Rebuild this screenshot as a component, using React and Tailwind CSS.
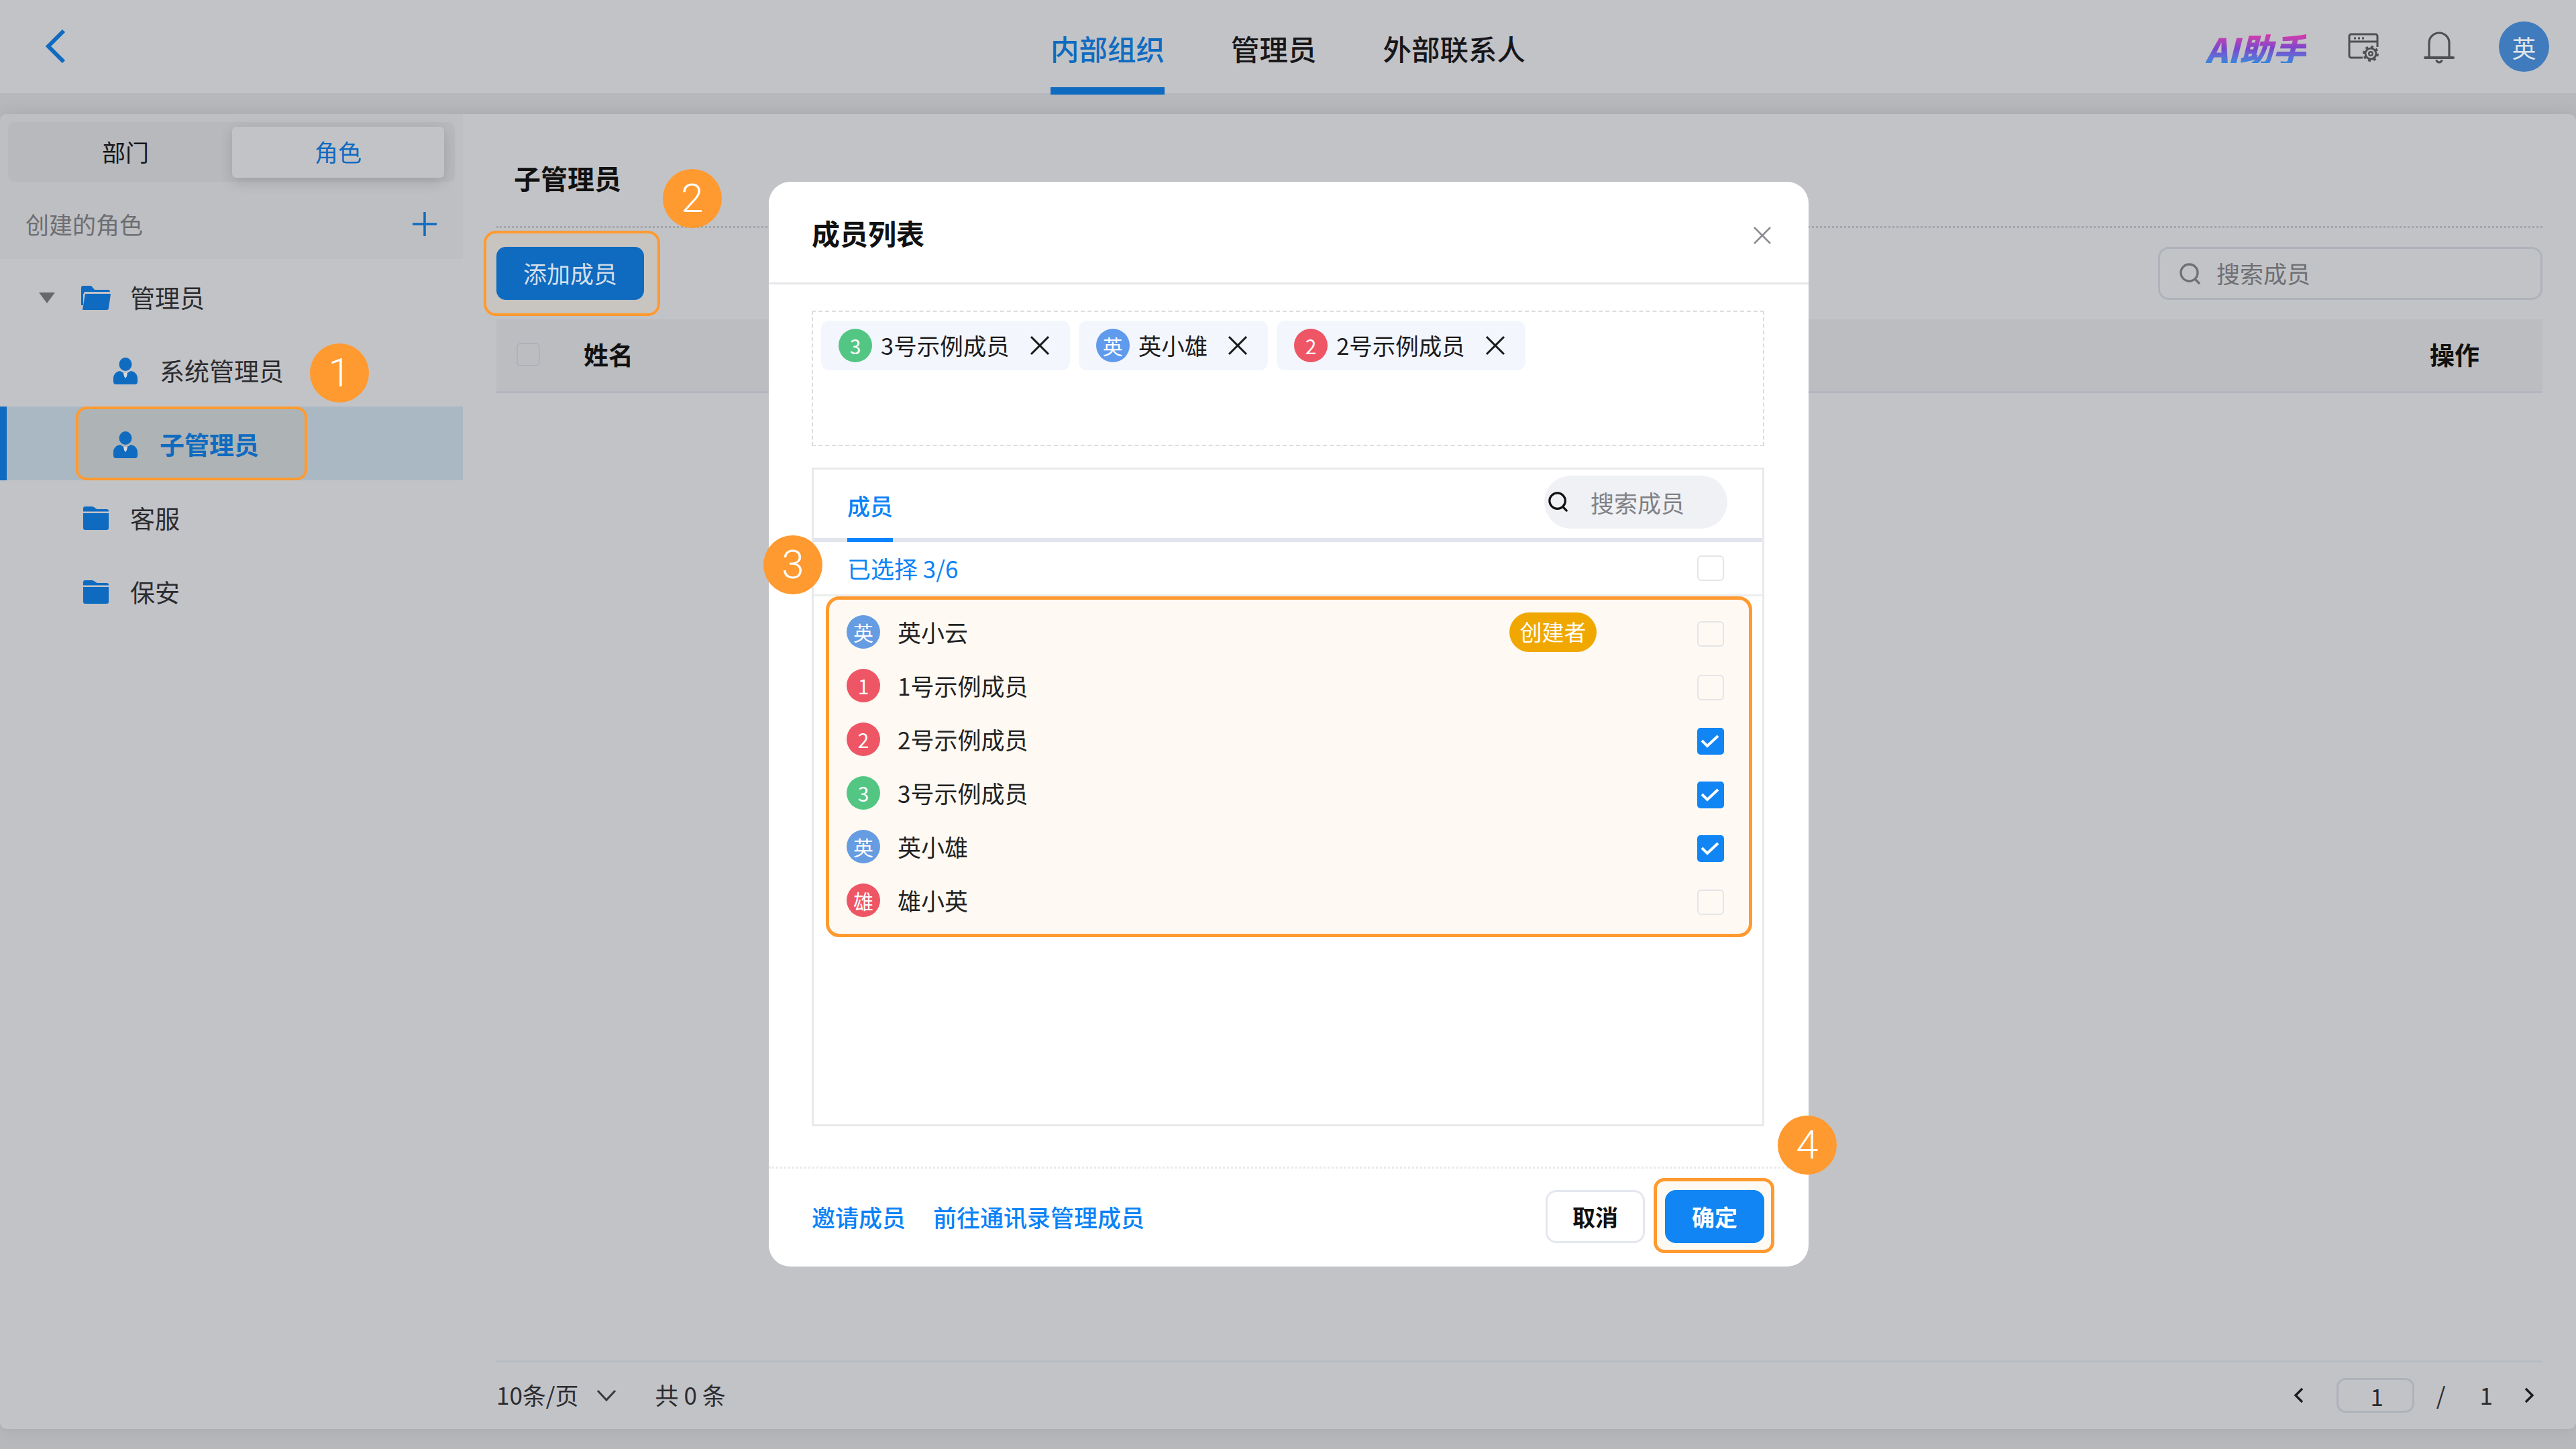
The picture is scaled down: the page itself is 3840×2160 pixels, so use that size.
const members = [
  { name: "英小云", mark: "英", color: "bg-[#659ce2]", creator: true },
  { name: "1号示例成员", mark: "1", color: "bg-[#ee5565]" },
  { name: "2号示例成员", mark: "2", color: "bg-[#ee5565]", checked: true },
  { name: "3号示例成员", mark: "3", color: "bg-[#53c684]", checked: true },
  { name: "英小雄", mark: "英", color: "bg-[#659ce2]", checked: true },
  { name: "雄小英", mark: "雄", color: "bg-[#ee5565]" },
];

const chips = [
  { name: "3号示例成员", mark: "3", color: "bg-[#53c684]" },
  { name: "英小雄", mark: "英", color: "bg-[#5f9aec]" },
  { name: "2号示例成员", mark: "2", color: "bg-[#ee5565]" },
];

const SearchIcon = ({ className }) => (
  <svg viewBox="0 0 34 34" fill="none" stroke="currentColor" strokeWidth="3.4" strokeLinecap="round" className={className}>
    <circle cx="15.5" cy="15.5" r="12.5" />
    <path d="M25 26l5 5" />
  </svg>
);

const OpenFolderIcon = () => (
  <svg viewBox="0 0 44 36" className="w-[44px] h-[36px] shrink-0" fill="#0f6bc0">
    <path d="M3 0h12l5 6h20a3 3 0 0 1 3 3H5l-2 4v16H0V3a3 3 0 0 1 3-3z" />
    <path d="M6 12h38l-3 21a3 3 0 0 1-3 3H2z" />
  </svg>
);

const FolderIcon = () => (
  <svg viewBox="0 0 38 35" className="w-[38px] h-[35px] shrink-0" fill="#0f6bc0">
    <path d="M0 3a3 3 0 0 1 3-3h10c3 0 5 3 8 4h14a3 3 0 0 1 3 3v.5H0z" />
    <path d="M0 10h38v22a3 3 0 0 1-3 3H3a3 3 0 0 1-3-3z" />
  </svg>
);

const UserIcon = () => (
  <svg viewBox="0 0 36 40" className="w-[36px] h-[40px] shrink-0" fill="#0f6bc0">
    <ellipse cx="18" cy="10" rx="9.5" ry="10" />
    <path d="M10 20c-6 1-10 5-10 11v5a4 4 0 0 0 4 4h28a4 4 0 0 0 4-4v-5c0-6-4-10-10-11l-5 3h-6z" />
    <path d="M15 23h6l-1 5-2 3-2-3z" fill="#d5dbe2" />
  </svg>
);

const CloseIcon = () => (
  <svg viewBox="0 0 30 30" className="w-[30px] h-[30px] shrink-0" stroke="#1a1a1c" strokeWidth="3">
    <path d="M2 2l26 26M28 2L2 28" />
  </svg>
);

const Checkbox = ({ checked, white }) =>
  checked ? (
    <span className="block w-[40px] h-[40px] rounded-[5px] bg-[#1085f3] shrink-0">
      <svg viewBox="0 0 40 40" className="w-[40px] h-[40px]" fill="none" stroke="#fff" strokeWidth="4">
        <path d="M7 19l8 8 16-15" />
      </svg>
    </span>
  ) : (
    <span className={`block w-[40px] h-[38px] rounded-[6px] border-[2px] border-[#e4e5e8] shrink-0 ${white ? "bg-white" : "bg-[#fef9f3]"}`} />
  );

const Avatar = ({ mark, color }) => (
  <span className={`w-[50px] h-[50px] rounded-full flex items-center justify-center text-white text-[30px] leading-none shrink-0 ${color}`}>
    {mark}
  </span>
);

const Step = ({ n, className }) => (
  <span className={`absolute z-30 w-[88px] h-[88px] rounded-full bg-[#ff9a30] text-white font-['Roboto',sans-serif] text-[60px] font-light leading-none flex items-center justify-center ${className}`}>
    {n}
  </span>
);

const Modal = () => (
  <div className="absolute z-20 left-[1146px] top-[271px] w-[1550px] h-[1617px] bg-white rounded-[32px] flex flex-col">
    <div className="h-[153px] shrink-0 border-b-[3px] border-[#e6e7ea] flex items-center justify-between pl-[64px] pr-[55px]">
      <span className="text-[42px] font-bold text-[#111]">成员列表</span>
      <svg viewBox="0 0 28 28" className="w-[28px] h-[28px] mt-[10px]" stroke="#8b8c90" strokeWidth="2.5">
        <path d="M2 2l24 24M26 2L2 26" />
      </svg>
    </div>

    <div className="pl-[64px] pr-[66px] pt-[39px] flex-1 flex flex-col">
      <div className="h-[202px] border-[2px] border-dashed border-[#dcdde1] pl-[12px] pt-[13px] flex items-start gap-[13px]">
        {chips.map((c) => (
          <div key={c.name} className="h-[74px] rounded-[12px] bg-[#f3f6fd] flex items-center pl-[26px] pr-[30px]">
            <Avatar mark={c.mark} color={c.color} />
            <span className="ml-[13px] mr-[30px] text-[34.5px] text-[#1c1c1e]">{c.name}</span>
            <CloseIcon />
          </div>
        ))}
      </div>

      <div className="mt-[32px] h-[982px] border-[3px] border-[#e8e9ec] flex flex-col">
        <div className="h-[108px] shrink-0 border-b-[6px] border-[#e2e5ec] flex items-center pl-[50px] pr-[52px]">
          <div className="relative h-full flex items-center pt-[4px]">
            <span className="text-[34px] font-medium text-[#0a82f7]">成员</span>
            <span className="absolute left-0 right-0 -bottom-[6px] h-[6px] bg-[#0a84ff]" />
          </div>
          <div className="ml-auto w-[273px] h-[79px] mt-[-6px] rounded-full bg-[#f0f1f5] flex items-center pl-[5px] text-[#808285]">
            <SearchIcon className="w-[32px] h-[32px] text-[#111]" />
            <span className="ml-[32px] text-[35px] pt-[2px]">搜索成员</span>
          </div>
        </div>

        <div className="h-[81px] shrink-0 border-b-[3px] border-[#eceded] flex items-center justify-between pl-[50px] pr-[57px]">
          <span className="text-[35px] text-[#0a82f7]">已选择 3/6</span>
          <Checkbox white />
        </div>

        <div className="ml-[18px] mr-[15px] h-[508px] border-[5px] border-[#ff9a30] rounded-[20px] bg-[#fef9f3] pt-[8px] pl-[26px] pr-[37px]">
          {members.map((m) => (
            <div key={m.name} className="h-[80px] flex items-center">
              <Avatar mark={m.mark} color={m.color} />
              <span className="ml-[26px] text-[35px] text-[#222]">{m.name}</span>
              {m.creator && (
                <span className="ml-auto w-[130px] h-[59px] rounded-full bg-[#f0a800] text-white text-[33px] flex items-center justify-center">
                  创建者
                </span>
              )}
              <span className={`block shrink-0 ${m.creator ? "ml-[150px]" : "ml-auto"} mt-[6px]`}>
                <Checkbox checked={m.checked} />
              </span>
            </div>
          ))}
        </div>
      </div>
    </div>

    <div className="h-[149px] shrink-0 border-t-[3px] border-dotted border-[#e8e9ec] flex items-start pt-[32px] pl-[64px] pr-[66px]">
      <span className="mt-[14px] text-[35px] font-medium text-[#0a82f7]">邀请成员</span>
      <span className="ml-[41px] mt-[14px] text-[35px] font-medium text-[#0a82f7]">前往通讯录管理成员</span>
      <button className="ml-auto w-[148px] h-[79px] rounded-[16px] border-[3px] border-[#e4e7ee] bg-white text-[34px] font-bold text-[#111]">
        取消
      </button>
      <div className="relative ml-[30px]">
        <span className="absolute -left-[17px] -right-[15px] -top-[18px] -bottom-[15px] rounded-[16px] border-[5px] border-[#ff9a30] bg-[#fef9f3]" />
        <button className="relative w-[148px] h-[79px] rounded-[16px] bg-[#1085f3] text-[34px] font-bold text-white">确定</button>
      </div>
    </div>
  </div>
);

export default function App() {
  return (
    <div className="relative w-[3840px] h-[2160px] overflow-hidden bg-[#b6b8bc] font-['Noto_Sans_CJK_SC','Liberation_Sans',sans-serif] text-[#1c1c1e]">
      {/* top bar */}
      <header className="relative z-10 h-[139px] bg-[#c2c3c7] flex items-start pl-[68px] pr-[40px]">
        <svg viewBox="0 0 30 50" className="w-[30px] h-[50px] mt-[44px]" fill="none" stroke="#0f6bc0" strokeWidth="6">
          <path d="M27 2L4 25l23 23" />
        </svg>
        <nav className="ml-[1468px] flex gap-[99px] text-[42.5px] font-medium">
          <div className="h-[141px] border-b-[11px] border-[#0f6bc0] text-[#0f6bc0] pt-[42px] leading-[60px]">内部组织</div>
          <div className="pt-[42px] leading-[60px] text-[#17171a]">管理员</div>
          <div className="pt-[42px] leading-[60px] text-[#17171a]">外部联系人</div>
        </nav>
        <div className="ml-auto flex items-start">
          <span className="mt-[50px] text-[50px] leading-[44px] italic font-black bg-linear-to-b from-[#e02fa6] via-[#7a45cc] to-[#2f86dd] bg-clip-text text-transparent">
            AI助手
          </span>
          <svg viewBox="0 0 46 44" className="ml-[62px] mt-[49px] w-[46px] h-[44px]" fill="none" stroke="#4f5054" strokeWidth="3">
            <path d="M22 37H5a3 3 0 0 1-3-3V5a3 3 0 0 1 3-3h36a3 3 0 0 1 3 3v16" />
            <path d="M2 13h42" />
            <path d="M9 8h3M15 8h3M21 8h3" />
            <circle cx="34" cy="31" r="8" />
            <circle cx="34" cy="31" r="10.5" strokeWidth="3" strokeDasharray="4 4.2" />
            <circle cx="34" cy="31" r="2.8" strokeWidth="2.4" />
          </svg>
          <svg viewBox="0 0 46 48" className="ml-[67px] mt-[47px] w-[46px] h-[48px]" fill="none" stroke="#4f5054" strokeWidth="3.2">
            <path d="M8 38V17a15 15 0 0 1 30 0v21" />
            <path d="M2 39h42" strokeWidth="4" strokeLinecap="round" />
            <path d="M19 42a4 4 0 0 0 8 0" />
          </svg>
          <span className="ml-[66px] mt-[32px] w-[75px] h-[75px] rounded-full bg-[#3f7bbd] text-[#dfe3e8] text-[36px] flex items-center justify-center">
            英
          </span>
        </div>
      </header>

      <div className="mt-[31px] h-[1960px] rounded-[10px] bg-[#c2c3c7] shadow-[0_0_26px_rgba(0,0,0,0.09)] flex overflow-hidden">
        {/* sidebar */}
        <aside className="w-[690px] shrink-0 flex flex-col">
          <div className="h-[216px] bg-[#bdbfc3] pt-[12px] px-[12px]">
            <div className="h-[89px] rounded-[10px] bg-[#b7b9bd] flex items-center pr-[15px] text-[35px] text-[#17171a]">
              <span className="w-[334px] pl-[16px] text-center">部门</span>
              <span className="w-[316px] h-[76px] rounded-[6px] bg-[#c2c3c7] shadow-[0_6px_20px_rgba(0,0,0,0.14)] text-[#0f6bc0] flex items-center justify-center">
                角色
              </span>
            </div>
            <div className="mt-[37px] pl-[26px] pr-[27px] flex items-center justify-between text-[35px] text-[#6d6e72]">
              <span>创建的角色</span>
              <svg viewBox="0 0 36 36" className="w-[36px] h-[36px]" stroke="#0f6bc0" strokeWidth="3.5">
                <path d="M18 0v36M0 18h36" />
              </svg>
            </div>
          </div>

          <div className="text-[37px] text-[#2c2c30]">
            <div className="h-[110px] flex items-center pl-[58px] pt-[5px]">
              <span className="w-0 h-0 border-x-[12px] border-x-transparent border-t-[16px] border-t-[#67686c]" />
              <span className="ml-[39px]"><OpenFolderIcon /></span>
              <span className="ml-[29px]">管理员</span>
            </div>
            <div className="h-[110px] flex items-center pl-[169px] pt-[3px]">
              <UserIcon />
              <span className="ml-[33px]">系统管理员</span>
            </div>
            <div className="h-[110px] flex bg-[#aab8c4] border-l-[10px] border-[#0f6bc0]">
              <div className="ml-[103px] w-[345px] h-full border-[4px] border-[#ff9a30] rounded-[16px] bg-[#aeb4b6] flex items-center pl-[52px] pt-[3px] text-[#0f6bc0] font-bold">
                <UserIcon />
                <span className="ml-[33px]">子管理员</span>
              </div>
            </div>
            <div className="h-[110px] flex items-center pl-[124px] pt-[3px]">
              <FolderIcon />
              <span className="ml-[32px]">客服</span>
            </div>
            <div className="h-[110px] flex items-center pl-[124px] pt-[3px]">
              <FolderIcon />
              <span className="ml-[32px]">保安</span>
            </div>
          </div>
        </aside>

        {/* main */}
        <main className="flex-1 flex flex-col pl-[50px] pr-[50px]">
          <div className="h-[170px] shrink-0 border-b-[3px] border-dotted border-[#a3a6ac] flex items-center pl-[26px] pt-[22px]">
            <span className="text-[40px] font-bold text-[#111]">子管理员</span>
          </div>

          <div className="mt-[28px] flex items-center justify-between">
            <div className="relative">
              <span className="absolute -left-[19px] -right-[24px] -top-[24px] -bottom-[24px] rounded-[18px] border-[4px] border-[#ff9a30] bg-[#c8c4bf]" />
              <button className="relative w-[220px] h-[79px] rounded-[14px] bg-[#0f6bc0] text-[35px] text-[#d4deea]">添加成员</button>
            </div>
            <div className="w-[573px] h-[79px] rounded-[16px] border-[3px] border-[#aeb2ba] flex items-center pl-[28px] text-[#6f7074]">
              <SearchIcon className="w-[34px] h-[34px]" />
              <span className="ml-[22px] text-[35px]">搜索成员</span>
            </div>
          </div>

          <div className="mt-[29px] h-[110px] shrink-0 bg-[#bcbdc1] border-b-[3px] border-[#b2b6bf] flex items-center justify-between pl-[30px] pr-[94px] pb-[2px]">
            <div className="flex items-center">
              <span className="w-[35px] h-[35px] rounded-[6px] border-[2px] border-[#aeb2ba]" />
              <span className="ml-[65px] text-[37px] font-bold text-[#111]">姓名</span>
            </div>
            <span className="text-[37px] font-bold text-[#111]">操作</span>
          </div>

          <div className="flex-1" />

          <div className="h-[102px] shrink-0 border-t-[3px] border-[#b6bbc3] flex items-center text-[35px] text-[#2c2c30] pb-[2px]">
            <span>10条/页</span>
            <svg viewBox="0 0 30 18" className="ml-[26px] w-[30px] h-[18px]" fill="none" stroke="#3a3a3e" strokeWidth="3">
              <path d="M2 2l13 14L28 2" />
            </svg>
            <span className="ml-[58px]">共 0 条</span>
            <svg viewBox="0 0 16 24" className="ml-auto w-[16px] h-[24px]" fill="none" stroke="#1c1c1e" strokeWidth="3.4">
              <path d="M13 2L3 12l10 10" />
            </svg>
            <span className="ml-[48px] w-[116px] h-[52px] rounded-[14px] border-[3px] border-[#aeb2ba] text-center leading-[48px] pl-[5px]">1</span>
            <span className="ml-[33px]">/</span>
            <span className="ml-[51px]">1</span>
            <svg viewBox="0 0 16 24" className="ml-[46px] mr-[12px] w-[16px] h-[24px]" fill="none" stroke="#1c1c1e" strokeWidth="3.4">
              <path d="M3 2l10 10L3 22" />
            </svg>
          </div>
        </main>
      </div>

      <Modal />

      <Step n="1" className="left-[462px] top-[512px]" />
      <Step n="2" className="left-[988px] top-[252px]" />
      <Step n="3" className="left-[1138px] top-[798px]" />
      <Step n="4" className="left-[2650px] top-[1663px]" />
    </div>
  );
}
